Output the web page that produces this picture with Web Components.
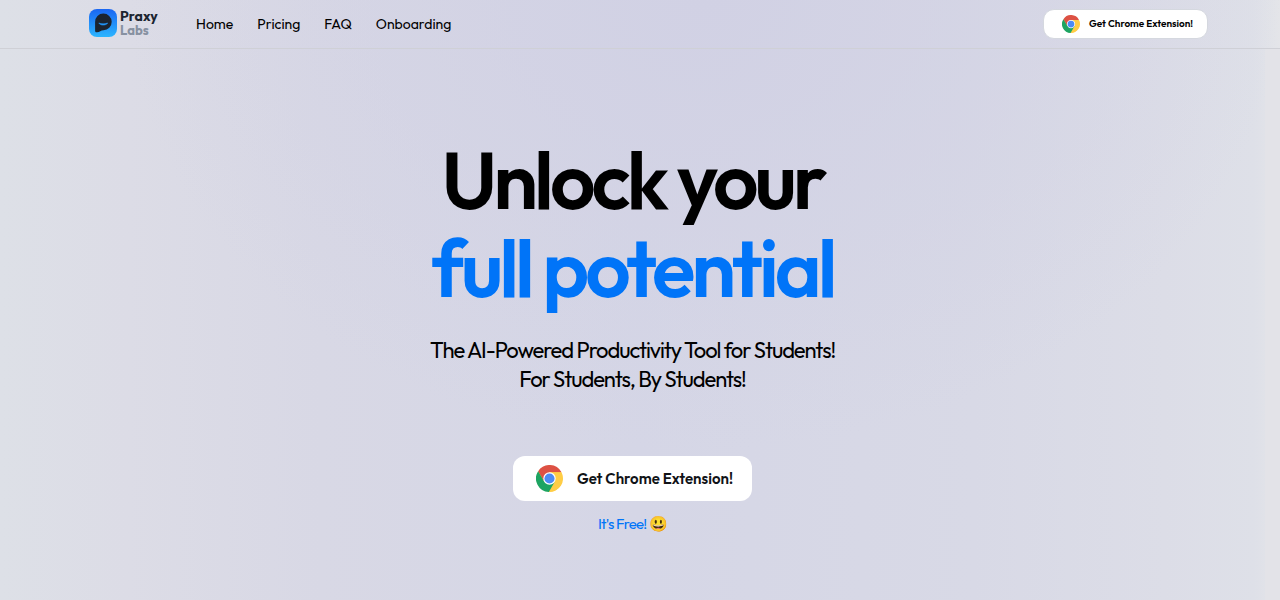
<!DOCTYPE html>
<html lang="en">
<head>
<meta charset="utf-8">
<meta name="viewport" content="width=device-width, initial-scale=1">
<title>Praxy Labs</title>
<style>
body { margin: 0; font-family: Outfit, Lato, sans-serif; color: #000; }
</style>
</head>
<body>
<praxy-page>
  <site-header slot="header">
    <praxy-logo slot="logo"></praxy-logo>
    <nav-link href="#home">Home</nav-link>
    <nav-link href="#pricing">Pricing</nav-link>
    <nav-link href="#faq">FAQ</nav-link>
    <nav-link href="#onboarding">Onboarding</nav-link>
    <extension-button slot="action" compact>Get Chrome Extension!</extension-button>
  </site-header>
  <hero-section>
    <span slot="title">Unlock your</span>
    <span slot="accent">full potential</span>
    <span slot="line1">The AI-Powered Productivity Tool for Students!</span>
    <span slot="line2">For Students, By Students!</span>
    <extension-button slot="action">Get Chrome Extension!</extension-button>
    <span slot="note">It's Free! 😃</span>
  </hero-section>
</praxy-page>
<script>
const define = (name, html) => customElements.define(name, class extends HTMLElement {
  constructor() {
    super();
    this.attachShadow({ mode: 'open' }).innerHTML = html;
  }
});

define('praxy-page', `
<style>
:host {
  display: flex; flex-direction: column; min-height: 100vh;
  background:
    linear-gradient(90deg, transparent calc(100% - 15px), #e3e3e8 calc(100% - 15px)) 0 49px no-repeat,
    radial-gradient(ellipse 45% 75% at 55% 0, #d1d1e4 0, #d1d1e400 100%),
    linear-gradient(90deg, #dde0e7 0, #dcdce6 10%, #d8d8e5 25%, #d5d6e6 50%, #d8d9e6 76%, #dcdde7 91%, #dee0e8 98%, #e4e5e9 100%);
}
main { flex: 1; padding-right: 15px; }
</style>
<slot name="header"></slot>
<main><slot></slot></main>`);

define('site-header', `
<style>
:host { display: block; border-bottom: 1px solid #cfd0d6; }
header { display: flex; align-items: center; height: 48px; padding: 0 72px 0 89px; }
nav { display: flex; gap: 24px; margin-left: 38px; margin-right: auto; }
</style>
<header><slot name="logo"></slot><nav aria-label="Main"><slot></slot></nav><slot name="action"></slot></header>`);

define('praxy-logo', `
<style>
:host { display: block; }
a { display: flex; gap: 3px; align-items: center; padding-bottom: 2px; color: #1c2530; text-decoration: none; font-size: 14px; line-height: 14px; font-weight: 700; }
svg { width: 28px; height: 28px; }
.name { display: flex; flex-direction: column; width: 38px; }
.labs { color: #8791a1; font-size: 13px; }
</style>
<a href="#home">
<svg viewBox="0 0 28 28" aria-hidden="true">
  <defs><linearGradient id="g" x1="0" y1="0" x2="0" y2="1"><stop offset="0" stop-color="#1a66f2"/><stop offset="1" stop-color="#2bb5ff"/></linearGradient></defs>
  <rect width="28" height="28" rx="8" fill="url(#g)"/>
  <path d="M14.300 4.600a8.300 8.300 0 0 1 .2 16.600C11.800 21.300 10.800 23 8 23.300c-1.400.1-1.900-.6-1.900-1.900V12.900a8.200 8.200 0 0 1 8.200-8.300z" fill="#1b2430"/>
  <path d="M9.800 14c1.500 2.700 7.300 2.700 8.900 0-2.300 1.100-6.600 1.100-8.900 0z" fill="#2196f8" stroke="#2196f8" stroke-width=".6" stroke-linejoin="round"/>
</svg>
<span class="name"><span>Praxy</span><span class="labs">Labs</span></span>
</a>`);

customElements.define('nav-link', class extends HTMLElement {
  constructor() {
    super();
    this.attachShadow({ mode: 'open' }).innerHTML = `
<style>
:host { display: block; }
a { color: #000; text-decoration: none; font-size: 14px; line-height: 24px; }
</style>
<a><slot></slot></a>`;
    this.shadowRoot.querySelector('a').href = this.getAttribute('href');
  }
});

define('chrome-icon', `
<style>:host { display: block; } svg { display: block; width: 100%; height: 100%; }</style>
<svg viewBox="0 0 48 48" aria-hidden="true">
  <circle cx="24" cy="24" r="23" fill="#ffcd46"/>
  <path d="M14.470 29.500 3.800 11.030A24 24 0 0 1 45.330 13H24z" fill="#dd5144"/>
  <path d="M24 13H45.330A24 24 0 0 1 22.870 47.970L33.530 29.500z" fill="#ffcd46"/>
  <path d="M33.530 29.500 22.870 47.970A24 24 0 0 1 3.800 11.030L14.470 29.500z" fill="#1da462"/>
  <circle cx="24" cy="24" r="11" fill="#fff"/>
  <circle cx="24" cy="24" r="9" fill="#4c8bf5"/>
</svg>`);

define('extension-button', `
<style>
:host { display: block; }
button {
  display: flex; align-items: center; gap: 14px; margin: 0; padding: 0 19px 0 23px; height: 45px; border: 0;
  border-radius: 12px; background: #fff; color: #111317; font: inherit; font-size: 15px; line-height: 24px; font-weight: 600; cursor: pointer;
}
chrome-icon { width: 27px; height: 27px; }
:host([compact]) button { gap: 9px; height: 30px; padding: 0 14px 0 18px; border: 1px solid #d5d8df; border-radius: 11px; color: #000; font-size: 10px; }
:host([compact]) chrome-icon { width: 18px; height: 18px; }
</style>
<button type="button"><chrome-icon></chrome-icon><span><slot></slot></span></button>`);

define('hero-section', `
<style>
:host { display: flex; flex-direction: column; align-items: center; padding: 87px 24px 64px; text-align: center; }
h1, p { margin: 0; letter-spacing: -0.05em; }
h1 { font-size: 80px; line-height: 88px; font-weight: 600; }
h1 span, .lead span { display: block; }
.accent, .note { color: #0074f8; }
.lead { margin-top: 24px; font-size: 22px; line-height: 29px; }
.action { margin-top: 62px; }
.note { margin-top: 11px; font-size: 15px; line-height: 24px; }
</style>
<h1><span><slot name="title"></slot></span><span class="accent"><slot name="accent"></slot></span></h1>
<p class="lead"><span><slot name="line1"></slot></span><span><slot name="line2"></slot></span></p>
<div class="action"><slot name="action"></slot></div>
<p class="note"><slot name="note"></slot></p>`);
</script>
</body>
</html>
